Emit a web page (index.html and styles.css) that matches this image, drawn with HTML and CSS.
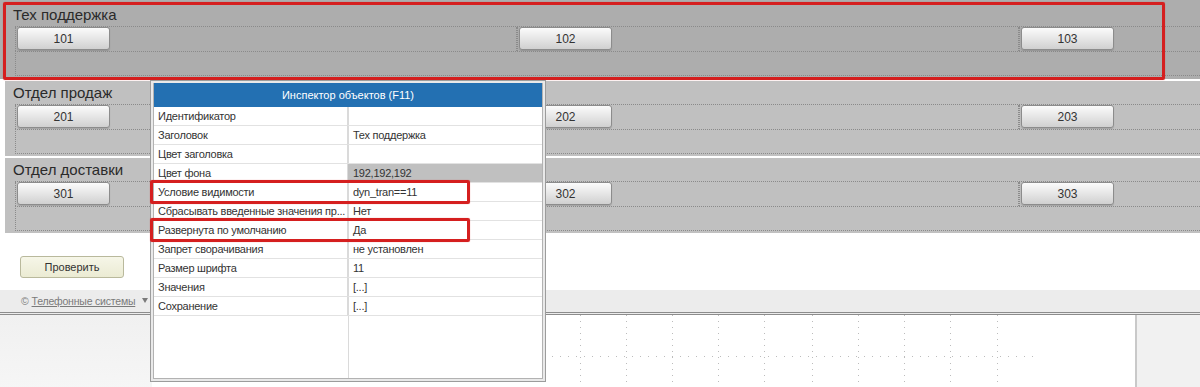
FILE: index.html
```html
<!DOCTYPE html>
<html lang="ru">
<head>
<meta charset="utf-8">
<title>Инспектор объектов</title>
<link rel="stylesheet" href="styles.css">
</head>
<body>
<div class="page">
  <div class="panels">
    <section class="panel panel-active">
      <div class="panel-title">Тех поддержка</div>
      <div class="btn-row">
        <div class="cell"><button class="btn">101</button></div>
        <div class="cell"><button class="btn">102</button></div>
        <div class="cell"><button class="btn">103</button></div>
      </div>
      <div class="empty-row"></div>
    </section>
    <section class="panel">
      <div class="panel-title">Отдел продаж</div>
      <div class="btn-row">
        <div class="cell"><button class="btn">201</button></div>
        <div class="cell"><button class="btn">202</button></div>
        <div class="cell"><button class="btn">203</button></div>
      </div>
      <div class="empty-row"></div>
    </section>
    <section class="panel">
      <div class="panel-title">Отдел доставки</div>
      <div class="btn-row">
        <div class="cell"><button class="btn">301</button></div>
        <div class="cell"><button class="btn">302</button></div>
        <div class="cell"><button class="btn">303</button></div>
      </div>
      <div class="empty-row"></div>
    </section>
  </div>

  <div class="actions"><button class="check-btn">Проверить</button></div>

  <div class="footer"><span class="copy">©</span> <a class="footer-link">Телефонные системы</a><span class="caret"></span></div>

  <div class="canvas-area">
    <div class="side-left"></div>
    <div class="canvas">
      <svg class="grid" width="985" height="72" viewBox="0 0 985 72">
        <g stroke="#bcbcbc" stroke-width="1" stroke-dasharray="1 5">
          <line x1="11.5" y1="0" x2="11.5" y2="72"/>
          <line x1="57.5" y1="0" x2="57.5" y2="72"/>
          <line x1="103.5" y1="0" x2="103.5" y2="72"/>
          <line x1="150.5" y1="0" x2="150.5" y2="72"/>
          <line x1="196.5" y1="0" x2="196.5" y2="72"/>
          <line x1="243.5" y1="0" x2="243.5" y2="72"/>
          <line x1="289.5" y1="0" x2="289.5" y2="72"/>
          <line x1="335.5" y1="0" x2="335.5" y2="72"/>
          <line x1="381.5" y1="0" x2="381.5" y2="72"/>
          <line x1="428.5" y1="0" x2="428.5" y2="72"/>
          <line x1="474.5" y1="0" x2="474.5" y2="72"/>
          <line x1="520.5" y1="0" x2="520.5" y2="72"/>
          <line x1="566.5" y1="0" x2="566.5" y2="72"/>
          <line x1="612.5" y1="0" x2="612.5" y2="72"/>
          <line x1="660.5" y1="0" x2="660.5" y2="72"/>
          <line x1="706.5" y1="0" x2="706.5" y2="72"/>
          <line x1="752.5" y1="0" x2="752.5" y2="72"/>
          <line x1="798.5" y1="0" x2="798.5" y2="72"/>
          <line x1="845.5" y1="0" x2="845.5" y2="72"/>
        </g>
        <line x1="0" y1="41.5" x2="885" y2="41.5" stroke="#bcbcbc" stroke-width="1" stroke-dasharray="1 7"/>
      </svg>
    </div>
    <div class="side-right"></div>
  </div>

  <div class="highlight hl-panel"></div>

  <div class="inspector">
    <div class="inspector-inner">
      <div class="inspector-header">Инспектор объектов (F11)</div>
      <div class="props">
        <div class="prop-name">Идентификатор</div><div class="prop-val"></div>
        <div class="prop-name">Заголовок</div><div class="prop-val">Тех поддержка</div>
        <div class="prop-name">Цвет заголовка</div><div class="prop-val"></div>
        <div class="prop-name">Цвет фона</div><div class="prop-val val-gray">192,192,192</div>
        <div class="prop-name">Условие видимости</div><div class="prop-val">dyn_tran==11</div>
        <div class="prop-name">Сбрасывать введенные значения пр...</div><div class="prop-val">Нет</div>
        <div class="prop-name">Развернута по умолчанию</div><div class="prop-val">Да</div>
        <div class="prop-name">Запрет сворачивания</div><div class="prop-val">не установлен</div>
        <div class="prop-name">Размер шрифта</div><div class="prop-val">11</div>
        <div class="prop-name">Значения</div><div class="prop-val">[...]</div>
        <div class="prop-name">Сохранение</div><div class="prop-val">[...]</div>
      </div>
    </div>
  </div>

  <div class="highlight hl-row1"></div>
  <div class="highlight hl-row2"></div>
</div>
</body>
</html>
```

FILE: styles.css
```css
* { box-sizing: border-box; }

html, body {
  margin: 0;
  padding: 0;
  background: #ffffff;
}

body {
  font-family: "Liberation Sans", Arial, sans-serif;
  color: #333333;
}

.page {
  position: relative;
  width: 1200px;
  height: 387px;
  overflow: hidden;
  background: #ffffff;
}

/* ---------- panels ---------- */
.panels {
  display: flex;
  flex-direction: column;
  gap: 2px;
}

.panel {
  margin-left: 5px;
  background: #c0c0c0;
  height: 75px;
  padding-left: 10px;
}

.panel-active {
  background: #adadad;
  height: 79px;
  padding-top: 3px;
  margin-left: 0;
  padding-left: 15px;
}

.panel-title {
  height: 23px;
  line-height: 22px;
  padding-top: 1px;
  margin-left: -2px;
  font-size: 15px;
  color: #2a2a2a;
}

.btn-row {
  display: flex;
  height: 25px;
  border-top: 1px dotted #8a8a8a;
}

.cell {
  width: 502px;
  flex: none;
  border-left: 1px dotted #8a8a8a;
  border-right: 1px dotted #8a8a8a;
  padding-left: 1px;
}

.empty-row {
  height: 25px;
  border-top: 1px dotted #8a8a8a;
  border-bottom: 1px dotted #8a8a8a;
  border-left: 1px dotted #8a8a8a;
}

.btn {
  display: block;
  width: 93px;
  height: 23px;
  margin: 0;
  padding: 0;
  border: 1px solid #8c8c8c;
  border-radius: 3px;
  background: linear-gradient(#fbfbfb, #e6e6e6 50%, #d0d0d0);
  box-shadow: 0 1px 1px rgba(0,0,0,0.15);
  font-family: "Liberation Sans", Arial, sans-serif;
  font-size: 12px;
  color: #333333;
  text-align: center;
}

/* ---------- check button ---------- */
.actions {
  height: 57px;
  padding-top: 23px;
  padding-left: 20px;
}

.check-btn {
  display: block;
  width: 104px;
  height: 22px;
  margin: 0;
  padding: 0;
  border: 1px solid #b9b99c;
  border-radius: 3px;
  background: linear-gradient(#f6f6e8, #ebebd3);
  font-family: "Liberation Sans", Arial, sans-serif;
  font-size: 11px;
  color: #333333;
}

/* ---------- footer ---------- */
.footer {
  display: flex;
  align-items: center;
  gap: 3px;
  height: 25px;
  padding-left: 21px;
  padding-bottom: 1px;
  background: #ececec;
  border-bottom: 3px double #8c8c8c;
  font-size: 10.5px;
  letter-spacing: -0.2px;
  color: #808080;
}

.footer-link {
  color: #7a7a7a;
  text-decoration: underline;
}

.caret {
  width: 0;
  height: 0;
  margin-left: 4px;
  border-left: 3px solid transparent;
  border-right: 3px solid transparent;
  border-top: 5px solid #7a7a7a;
}

/* ---------- canvas ---------- */
.canvas-area {
  display: flex;
  height: 75px;
}

.side-left {
  width: 152px;
  flex: none;
  background: linear-gradient(#f0f0f0, #f6f6f6);
}

.canvas {
  width: 985px;
  flex: none;
  background: #ffffff;
  border-right: 2px solid #c9c9c9;
}

.grid { display: block; }

.side-right {
  flex: 1;
  background: #f1f1f1;
}

/* ---------- highlights ---------- */
.highlight {
  position: absolute;
  border: 3px solid #d51f1f;
  border-radius: 2px;
  box-shadow: 0 0 1px rgba(213,31,31,0.6);
}

.hl-panel {
  left: 3px;
  top: 2px;
  width: 1162px;
  height: 78px;
}

.hl-row1 {
  left: 150px;
  top: 180px;
  width: 320px;
  height: 24px;
}

.hl-row2 {
  left: 150px;
  top: 218px;
  width: 320px;
  height: 24px;
}

/* ---------- inspector ---------- */
.inspector {
  position: absolute;
  left: 150px;
  top: 80px;
  width: 396px;
  height: 302px;
  border: 1px solid #9c9c9c;
  padding: 2px;
  background: #e9e9e9;
}

.inspector-inner {
  height: 100%;
  border: 1px solid #b2b2b2;
  border-top: none;
  background: #ffffff;
  display: flex;
  flex-direction: column;
}

.inspector-header {
  height: 24px;
  line-height: 24px;
  background: #2370b2;
  color: #ffffff;
  font-size: 11px;
  text-align: center;
  flex: none;
}

.props {
  flex: 1;
  display: grid;
  grid-template-columns: 194px 1fr;
  grid-auto-rows: 19px;
  align-content: start;
  background: linear-gradient(to right, transparent 194px, #dadada 194px, #dadada 195px, transparent 195px);
}

.prop-name,
.prop-val {
  height: 19px;
  line-height: 18px;
  border-bottom: 1px solid #e2e2e2;
  font-size: 11px;
  letter-spacing: -0.25px;
  color: #333333;
  white-space: nowrap;
  overflow: hidden;
}

.prop-name {
  padding-left: 4px;
  border-right: 1px solid #dadada;
}

.prop-val {
  padding-left: 5px;
}

.val-gray {
  background: #c0c0c0;
}
```
